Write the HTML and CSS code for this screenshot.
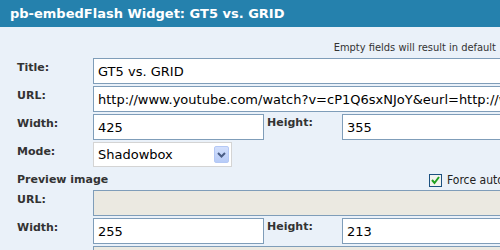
FILE: index.html
```html
<!DOCTYPE html>
<html lang="en">
<head>
    <meta charset="UTF-8">
    <title>pb-embedFlash Widget</title>
    <link rel="stylesheet" href="styles.css">
</head>
<body>
    <header class="titlebar">pb-embedFlash Widget: GT5 vs. GRID</header>
    <main class="form">
        <p class="note">Empty fields will result in default</p>

        <div class="row">
            <label class="label" for="title">Title:</label>
            <input class="field" id="title" type="text" value="GT5 vs. GRID">
        </div>
        <div class="row">
            <label class="label" for="url">URL:</label>
            <input class="field" id="url" type="text" value="http://www.youtube.com/watch?v=cP1Q6sxNJoY&amp;eurl=http://www.pb-embedflash.de">
        </div>
        <div class="row row-pair">
            <label class="label" for="width">Width:</label>
            <input class="field" id="width" type="text" value="425">
            <label class="label label-inline" for="height">Height:</label>
            <input class="field" id="height" type="text" value="355">
        </div>
        <div class="row">
            <span class="label">Mode:</span>
            <div class="select">
                <span class="select-text">Shadowbox</span>
                <span class="select-arrow">
                    <svg width="9" height="6" viewBox="0 0 9 6"><path d="M1 1 L4.5 4.5 L8 1" fill="none" stroke="#4a5d85" stroke-width="2"/></svg>
                </span>
            </div>
        </div>
        <div class="section">
            <span class="section-title">Preview image</span>
            <span class="check">
                <span class="checkbox">
                    <svg width="11" height="11" viewBox="0 0 11 11"><path d="M2 5 L4.5 8 L9 2" fill="none" stroke="#21a121" stroke-width="2"/></svg>
                </span>
                Force auto
            </span>
        </div>
        <div class="row">
            <span class="label">URL:</span>
            <input class="field field-disabled" type="text" value="" disabled>
        </div>
        <div class="row row-pair">
            <label class="label" for="pwidth">Width:</label>
            <input class="field" id="pwidth" type="text" value="255">
            <label class="label label-inline" for="pheight">Height:</label>
            <input class="field" id="pheight" type="text" value="213">
        </div>
        <div class="row">
            <span class="label">Link:</span>
            <input class="field field-disabled" type="text" value="" disabled>
        </div>
    </main>
</body>
</html>
```

FILE: styles.css
```css
body {
    margin: 0;
    background-color: #eaf1f9;
    font-family: "DejaVu Sans", Verdana, sans-serif;
    color: #333;
    overflow: hidden;
}

.titlebar {
    height: 27px;
    line-height: 28px;
    padding-left: 10px;
    background-color: #2581ad;
    color: white;
    font-size: 13px;
    font-weight: bold;
}

.form {
    width: 540px;
    padding-left: 17px;
}

.note {
    width: 479px;
    margin: 0;
    padding: 14px 0 0;
    height: 17px;
    text-align: right;
    font-family: "DejaVu Sans Condensed", "DejaVu Sans", sans-serif;
    font-size: 11px;
    line-height: 14px;
}

.row {
    display: grid;
    grid-template-columns: 76px 1fr;
    height: 26px;
    margin-bottom: 2px;
}

.row-pair {
    grid-template-columns: 76px 171px 78px 1fr;
}

.label {
    padding-top: 3px;
    font-size: 11px;
    line-height: 14px;
    font-weight: bold;
}

.label-inline {
    padding-left: 3px;
    padding-top: 2px;
}

.field {
    box-sizing: border-box;
    height: 26px;
    margin: 0;
    padding: 0 4px;
    border: 1px solid #7f9db9;
    background-color: white;
    font-family: "DejaVu Sans", Verdana, sans-serif;
    font-size: 13px;
    color: black;
    outline: none;
}

.field-disabled {
    background-color: #ebe9e1;
}

.select {
    box-sizing: border-box;
    width: 139px;
    height: 25px;
    display: flex;
    align-items: center;
    justify-content: space-between;
    padding: 0 2px 0 4px;
    border: 1px solid #d4d4d4;
    background-color: white;
    font-size: 13px;
    color: black;
}

.select-arrow {
    box-sizing: border-box;
    width: 15px;
    height: 17px;
    display: flex;
    align-items: center;
    justify-content: center;
    border: 1px solid #b4c8f5;
    border-radius: 2px;
    background: linear-gradient(#d3e0fd, #b7cbf7);
}

.section {
    display: grid;
    grid-template-columns: 412px 1fr;
    align-items: center;
    height: 20px;
}

.section-title {
    font-size: 11px;
    font-weight: bold;
    padding-bottom: 1px;
}

.check {
    display: flex;
    align-items: center;
    gap: 5px;
    font-family: "DejaVu Sans Condensed", "DejaVu Sans", sans-serif;
    font-size: 12px;
    color: #222;
    white-space: nowrap;
}

.checkbox {
    box-sizing: border-box;
    width: 13px;
    height: 13px;
    display: flex;
    align-items: center;
    justify-content: center;
    border: 1px solid #1c5180;
    background-color: #f4f4f0;
}
```
